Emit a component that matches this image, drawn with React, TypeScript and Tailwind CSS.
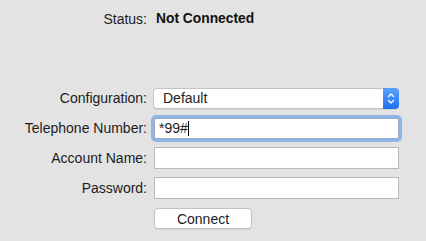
export default function App() {
  const rows = [
    { label: 'Account Name:', value: '' },
    { label: 'Password:', value: '' },
  ];

  return (
    <div className="w-[426px] h-[241px] bg-[#e3e3e3] text-[14px] text-[#1c1c1c] overflow-hidden" style={{ fontFamily: '"Liberation Sans", Arial, sans-serif' }}>
      <div className="flex items-center h-[16px] mt-[11px]">
        <div className="w-[147px] text-right">Status:</div>
        <div className="ml-[9px] text-[13.8px] font-bold text-[#111]">Not Connected</div>
      </div>

      <div className="mt-[60px] flex flex-col gap-[8px]">
        <div className="flex items-center h-[22px]">
          <div className="w-[147px] text-right">Configuration:</div>
          <div className="ml-[6px] w-[246px] h-[21px] flex bg-white border border-[#c4c4c4] rounded-[4px] shadow-[0_1px_0_rgba(0,0,0,0.08)]">
            <div className="flex-1 flex items-center pl-[9px]">Default</div>
            <div className="w-[16px] -my-px -mr-px rounded-r-[4px] bg-gradient-to-b from-[#5aa3fb] to-[#1d6ef3] flex items-center justify-center">
              <svg width="8" height="13" viewBox="0 0 8 13" fill="none" stroke="white" strokeWidth="1.3" strokeLinecap="round" strokeLinejoin="round">
                <path d="M1.5 4.5 L4 2 L6.5 4.5" />
                <path d="M1.5 8.5 L4 11 L6.5 8.5" />
              </svg>
            </div>
          </div>
        </div>

        <div className="flex items-center h-[22px]">
          <div className="w-[147px] text-right">Telephone Number:</div>
          <div className="ml-[7px] w-[245px] h-[21px] flex items-center bg-white border border-[#9aa9bd] ring-[3px] ring-[#8fb6e8] rounded-[2px] pl-[4px]">
            <span>*99#</span>
            <span className="w-px h-[15px] bg-black" />
          </div>
        </div>

        {rows.map((r) => (
          <div key={r.label} className="flex items-center h-[22px]">
            <div className="w-[147px] text-right">{r.label}</div>
            <div className="ml-[7px] w-[245px] h-[22px] bg-white border border-[#b9b9b9]" />
          </div>
        ))}

        <div className="flex items-center h-[22px]">
          <div className="w-[147px]" />
          <button className="ml-[7px] w-[98px] h-[21px] bg-white border border-[#c2c2c2] rounded-[4px] shadow-[0_1px_0_rgba(0,0,0,0.08)] text-[#1c1c1c]">
            Connect
          </button>
        </div>
      </div>
    </div>
  );
}
